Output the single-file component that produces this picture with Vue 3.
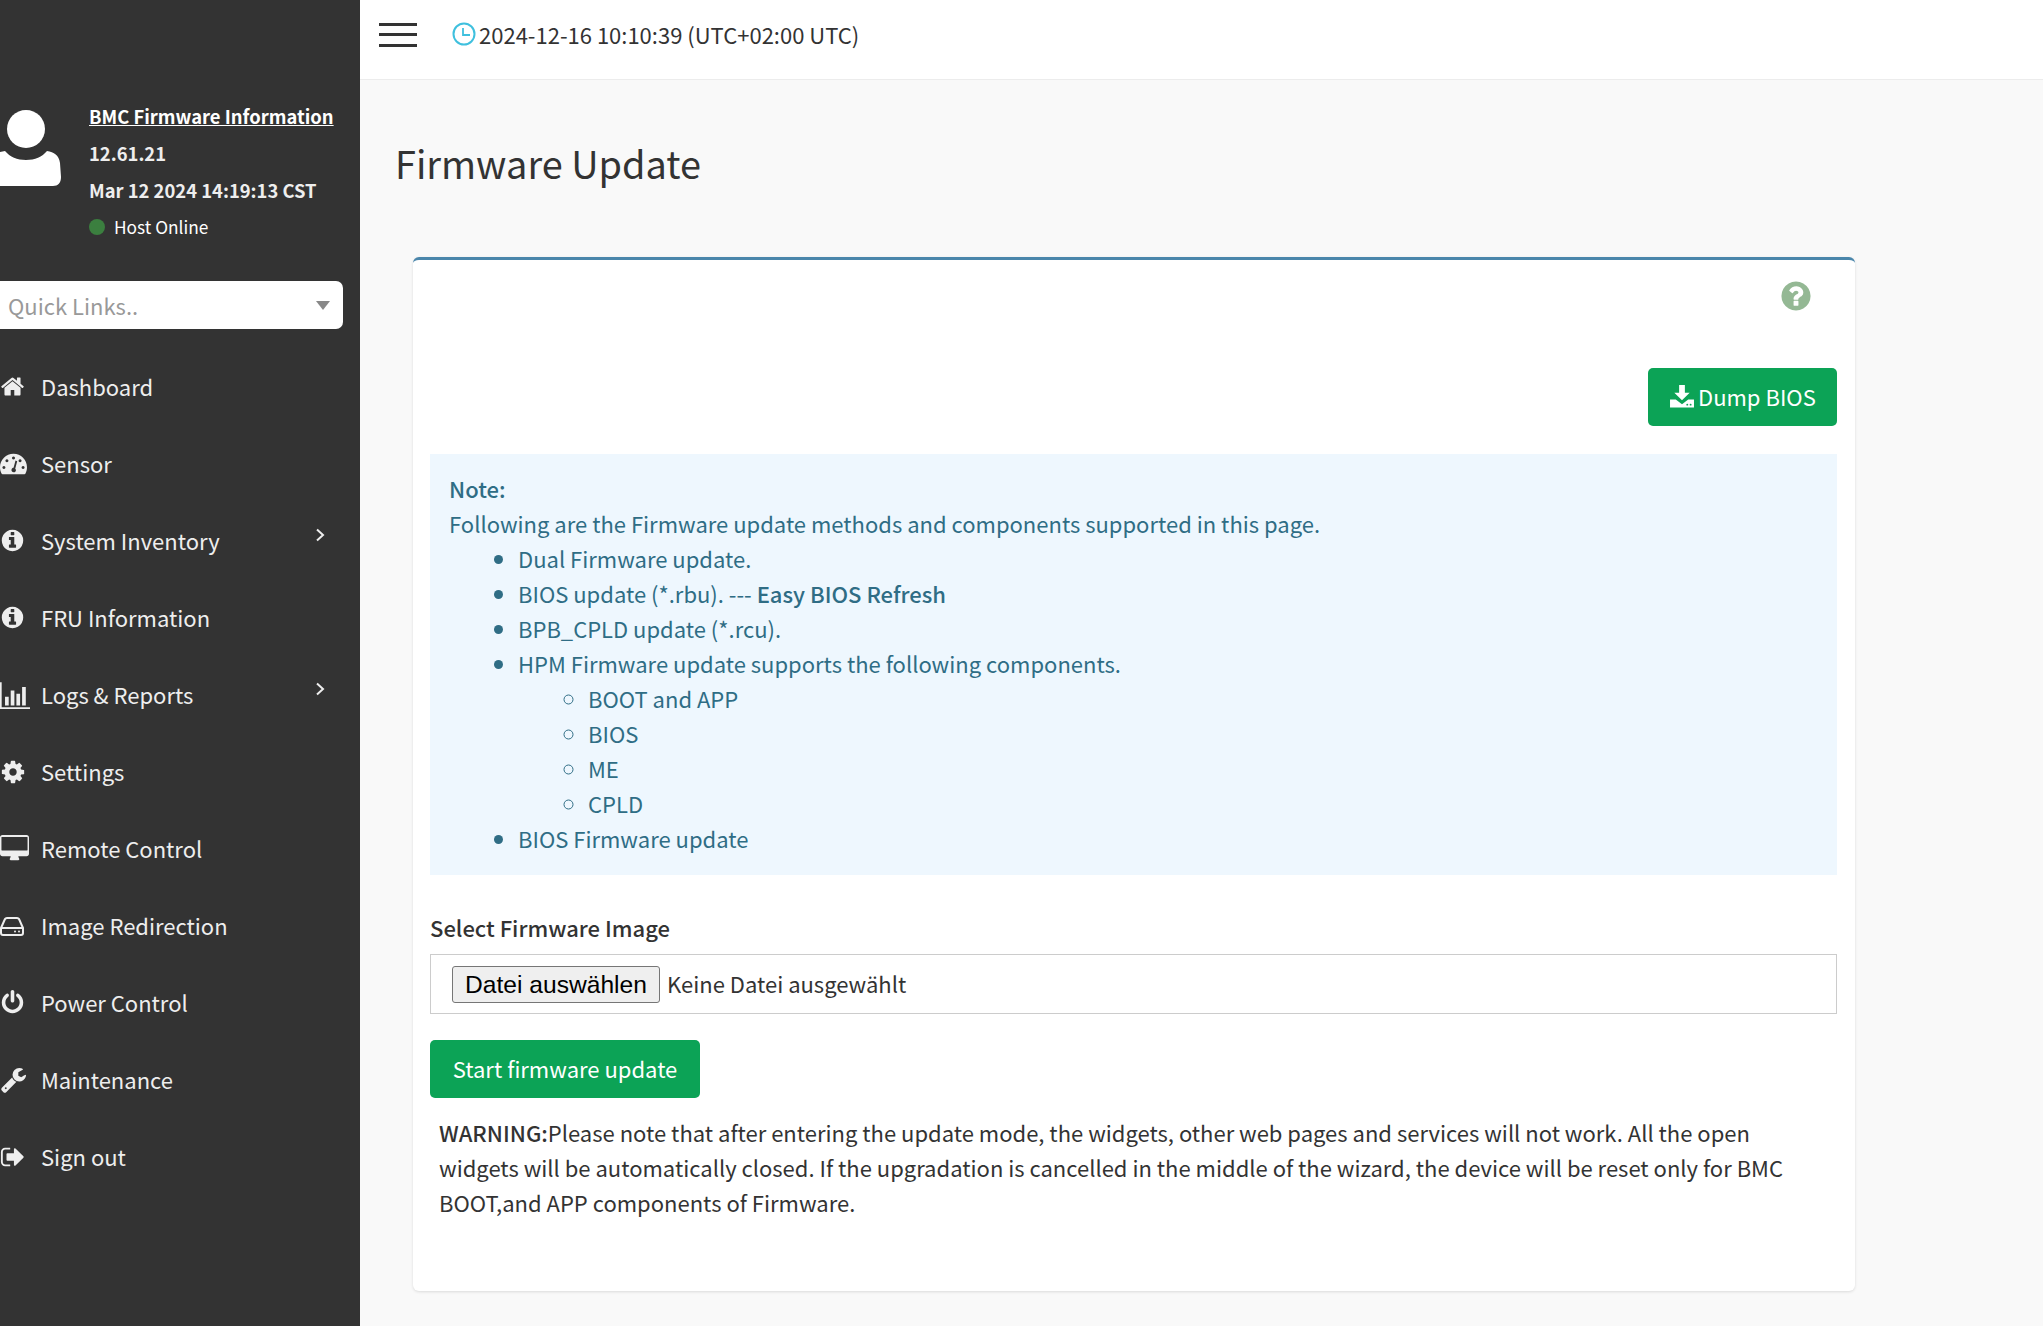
<script setup>
const P = {
  home: 'M1472 992v480q0 26-19 45t-45 19h-384v-384h-256v384h-384q-26 0-45-19t-19-45v-480q0-1 .5-3t.5-3l575-474 575 474q1 2 1 6zm223-69l-62 74q-8 9-21 11h-3q-13 0-21-7l-692-577-692 577q-12 8-24 7-13-2-21-11l-62-74q-8-10-7-23.500t11-21.500l719-599q32-26 76-26t76 26l244 204v-195q0-14 9-23t23-9h192q14 0 23 9t9 23v408l219 182q10 8 11 21.500t-7 23.500z',
  info: 'M1152 1376v-160q0-14-9-23t-23-9h-96v-512q0-14-9-23t-23-9h-320q-14 0-23 9t-9 23v160q0 14 9 23t23 9h96v320h-96q-14 0-23 9t-9 23v160q0 14 9 23t23 9h448q14 0 23-9t9-23zm-128-896v-160q0-14-9-23t-23-9h-192q-14 0-23 9t-9 23v160q0 14 9 23t23 9h192q14 0 23-9t9-23zm640 416q0 209-103 385.500t-279.500 279.500-385.500 103-385.500-103-279.500-279.500-103-385.500 103-385.500 279.500-279.500 385.500-103 385.500 103 279.500 279.500 103 385.500z',
  cog: 'M1152 896q0-106-75-181t-181-75-181 75-75 181 75 181 181 75 181-75 75-181zm512-109v222q0 12-8 23t-20 13l-185 28q-19 54-39 91 35 50 107 138 10 12 10 25t-9 23q-27 37-99 108t-94 71q-12 0-26-9l-138-108q-44 23-91 38-16 136-29 186-7 28-36 28h-222q-14 0-24.500-8.500t-11.500-21.500l-28-184q-49-16-90-37l-141 107q-10 9-25 9-14 0-25-11-126-114-165-168-7-10-7-23 0-12 8-23 15-21 51-66.500t54-70.500q-27-50-41-99l-183-27q-13-2-21-12.500t-8-23.500v-222q0-12 8-23t19-13l186-28q14-46 39-92-40-57-107-138-10-12-10-24 0-10 9-23 26-36 98.500-107.500t94.500-71.500q13 0 26 10l138 107q44-23 91-38 16-136 29-186 7-28 36-28h222q14 0 24.500 8.500t11.500 21.500l28 184q49 16 90 37l142-107q9-9 24-9 13 0 25 10 129 119 165 170 7 8 7 22 0 12-8 23-15 21-51 66.500t-54 70.500q26 50 41 98l183 28q13 2 21 12.500t8 23.500z',
  power: 'M1664 896q0 156-61 298t-164 245-245 164-298 61-298-61-245-164-164-245-61-298q0-182 80.500-343t226.500-270q43-32 95.500-25t83.500 50q32 42 24.500 94.500t-49.500 84.500q-98 74-151.500 181t-53.500 228q0 104 40.500 198.500t109.500 163.500 163.500 109.500 198.500 40.500 198.500-40.500 163.500-109.500 109.500-163.500 40.500-198.500q0-121-53.500-228t-151.500-181q-42-32-49.500-84.500t24.500-94.500q31-43 84-50t95 25q146 109 226.500 270t80.500 343zm-640-768v640q0 52-38 90t-90 38-90-38-38-90v-640q0-52 38-90t90-38 90 38 38 90z',
  wrench: 'M448 1472q0-26-19-45t-45-19-45 19-19 45 19 45 45 19 45-19 19-45zm644-420l-682 682q-37 37-90 37-52 0-91-37l-106-108q-38-36-38-90 0-53 38-91l681-681q39 98 114.500 173.500t173.500 114.500zm634-435q0 39-23 106-47 134-164.500 217.500t-258.500 83.500q-185 0-316.500-131.500t-131.500-316.500 131.500-316.500 316.500-131.500q58 0 121.500 16.500t107.500 46.500q16 11 16 28t-16 28l-293 169v224l193 107q5-3 79-48.500t135.500-81 70.500-35.500q15 0 23.500 10t8.500 25z',
  signout: 'M704 1440q0 4 1 20t.5 26.500-3 23.500-10 19.500-20.500 6.500h-320q-119 0-203.500-84.500t-84.500-203.500v-704q0-119 84.500-203.500t203.500-84.500h320q13 0 22.500 9.500t9.500 22.500q0 4 1 20t.5 26.500-3 23.500-10 19.500-20.500 6.500h-320q-66 0-113 47t-47 113v704q0 66 47 113t113 47h312l11.500 1 11.500 3 8 5.500 7 9 2 13.500zm928-544q0 26-19 45l-544 544q-19 19-45 19t-45-19-19-45v-288h-448q-26 0-45-19t-19-45v-384q0-26 19-45t45-19h448v-288q0-26 19-45t45-19 45 19l544 544q19 19 19 45z',
  desktop: 'M160 0h1600q66 0 113 47t47 113v1088q0 66-47 113t-113 47h-544q0 37 16 77t32 71 16 44q0 26-19 45t-45 19h-512q-26 0-45-19t-19-45q0-14 16-44t32-70 16-78h-544q-66 0-113-47t-47-113v-1088q0-66 47-113t113-47zm-32 128q-13 0-22 10t-10 22v832q0 13 10 22t22 10h1664q13 0 22-10t10-22v-832q0-13-10-22t-22-10z',
  bars: 'M0 128h100v1500h1692v100h-1792z M300 1000h220v520h-220z M640 620h220v900h-220z M980 820h220v700h-220z M1320 420h220v1100h-220z',
  gauge: 'M896 256c-495 0-896 400-896 896 0 150 37 290 100 410 14 26 40 40 70 40h1452c30 0 56-14 70-40 63-120 100-260 100-410 0-496-401-896-896-896z M896 430a100 100 0 1 1-.1 0z M460 620a100 100 0 1 1-.1 0z M260 1060a100 100 0 1 1-.1 0z M1332 620a100 100 0 1 1-.1 0z M1532 1060a100 100 0 1 1-.1 0z M1030 700l110 40-130 500c70 60 70 190-40 230-130 50-250-70-200-190 30-70 90-100 130-100z',
  question: 'M1024 1376v-192q0-14-9-23t-23-9h-192q-14 0-23 9t-9 23v192q0 14 9 23t23 9h192q14 0 23-9t9-23zm256-672q0-88-55.500-163t-138.500-116-170-41q-243 0-371 213-15 24 8 42l132 100q7 6 19 6 16 0 25-12 53-68 86-92 34-24 86-24 48 0 85.500 26t37.500 59q0 38-20 61t-68 45q-63 28-115.500 86.500t-52.500 125.500v36q0 14 9 23t23 9h192q14 0 23-9t9-23q0-19 21.500-49.500t54.500-49.500q32-18 49-28.500t46-35 44.500-48 28-60.500 12.500-81zm384 192q0 209-103 385.500t-279.500 279.500-385.500 103-385.500-103-279.500-279.500-103-385.500 103-385.500 279.500-279.500 385.500-103 385.500 103 279.500 279.500 103 385.500z'
}
const menu = [
  { label: 'Dashboard', icon: 'home', w: 25, vb: '0 0 1792 1792' },
  { label: 'Sensor', icon: 'gauge', w: 27, vb: '0 0 1792 1792', evenodd: true },
  { label: 'System Inventory', icon: 'info', w: 25, vb: '0 0 1792 1792', arrow: true },
  { label: 'FRU Information', icon: 'info', w: 25, vb: '0 0 1792 1792' },
  { label: 'Logs & Reports', icon: 'bars', w: 30, vb: '0 0 1792 1792' },
  { label: 'Settings', icon: 'cog', w: 26, vb: '0 0 1792 1792' },
  { label: 'Remote Control', icon: 'desktop', w: 29, vb: '0 0 1920 1792', evenodd: true },
  { label: 'Image Redirection', icon: 'hdd', w: 24 },
  { label: 'Power Control', icon: 'power', w: 25, vb: '0 0 1792 1792' },
  { label: 'Maintenance', icon: 'wrench', w: 27, vb: '0 0 1792 1792' },
  { label: 'Sign out', icon: 'signout', w: 26, vb: '0 0 1792 1792' }
]
</script>

<template>
  <div class="page">
    <aside class="side">
      <div class="user">
        <svg class="avatar" viewBox="0 0 61 76" width="61" height="76">
          <circle cx="26" cy="19" r="19" fill="#fff" />
          <path d="M-10 48c4-5 10-6 15-7 5 6 12 9 21 9s16-3 21-9c7 1 12 4 13 12l1 14c0 6-3 9-8 9H-10z" fill="#fff" />
        </svg>
        <div class="info">
          <a class="fw">BMC Firmware Information</a>
          <div class="b">12.61.21</div>
          <div class="b">Mar 12 2024 14:19:13 CST</div>
          <div class="host"><span class="dot"></span>Host Online</div>
        </div>
      </div>
      <div class="quick">
        <span>Quick Links..</span>
        <i class="caret"></i>
      </div>
      <nav class="menu">
        <a v-for="m in menu" :key="m.label" class="item">
          <span class="ico">
            <svg v-if="m.icon === 'hdd'" viewBox="0 0 24 20" width="24" height="20" fill="none" stroke="#eee" stroke-width="2">
              <path d="M1 12 5 3q.5-1 2-1h10q1.500 0 2 1l4 9v5q0 2-2 2H3q-2 0-2-2z M1 12h22" />
              <circle cx="15" cy="15.500" r="1" fill="#eee" stroke="none" />
              <circle cx="19" cy="15.500" r="1" fill="#eee" stroke="none" />
            </svg>
            <svg v-else :viewBox="m.vb" :width="m.w" :height="m.w * 1792 / (m.vb === '0 0 1920 1792' ? 1920 : 1792)">
              <path :d="P[m.icon]" fill="#eee" :fill-rule="m.evenodd ? 'evenodd' : 'nonzero'" />
            </svg>
          </span>
          <span class="lbl">{{ m.label }}</span>
          <svg v-if="m.arrow || m.label === 'Logs & Reports'" class="chev" viewBox="0 0 10 14" width="10" height="14">
            <path d="M2 1.500 8 7l-6 5.500" fill="none" stroke="#eee" stroke-width="2" />
          </svg>
        </a>
      </nav>
    </aside>

    <div class="body">
      <header class="top">
        <div class="burger"><i></i><i></i><i></i></div>
        <svg class="clock" viewBox="0 0 24 24" width="24" height="24">
          <circle cx="12" cy="12" r="10.500" fill="none" stroke="#3fc0de" stroke-width="2" />
          <path d="M11 6v7h7" fill="none" stroke="#3fc0de" stroke-width="1.800" />
        </svg>
        <span class="time">2024-12-16 10:10:39 (UTC+02:00 UTC)</span>
      </header>

      <main class="main">
        <h1>Firmware Update</h1>
        <section class="card">
          <div class="help">
            <svg viewBox="0 0 1792 1792" width="34" height="34"><path :d="P.question" fill="#94b894" /></svg>
          </div>
          <div class="dumprow">
            <button class="btn dump">
              <svg viewBox="0 0 25 24" width="24" height="23">
                <path d="M9.500 0h6v8h5l-8 8-8-8h5z M0 15h6l6.500 5L19 15h6v8.500H0z" fill="#fff" />
                <circle cx="18" cy="20.500" r="1" fill="#0ca356" /><circle cx="21.500" cy="20.500" r="1" fill="#0ca356" />
              </svg>
              Dump BIOS
            </button>
          </div>
          <div class="note">
            <strong>Note:</strong>
            <div>Following are the Firmware update methods and components supported in this page.</div>
            <ul>
              <li>Dual Firmware update.</li>
              <li>BIOS update (*.rbu). --- <strong>Easy BIOS Refresh</strong></li>
              <li>BPB_CPLD update (*.rcu).</li>
              <li>HPM Firmware update supports the following components.
                <ul>
                  <li>BOOT and APP</li>
                  <li>BIOS</li>
                  <li>ME</li>
                  <li>CPLD</li>
                </ul>
              </li>
              <li>BIOS Firmware update</li>
            </ul>
          </div>
          <label class="lab">Select Firmware Image</label>
          <div class="file">
            <button class="choose">Datei auswählen</button>
            <span class="none">Keine Datei ausgewählt</span>
          </div>
          <button class="btn start">Start firmware update</button>
          <p class="warn"><strong>WARNING:</strong>Please note that after entering the update mode, the widgets, other web pages and services will not work. All the open widgets will be automatically closed. If the upgradation is cancelled in the middle of the wizard, the device will be reset only for BMC BOOT,and APP components of Firmware.</p>
        </section>
      </main>
    </div>
  </div>
</template>

<style>
html, body { margin: 0; background: #f9f9f9; }
</style>

<style scoped>
.page {
  display: flex;
  width: 2043px;
  height: 1326px;
  overflow: hidden;
  font-family: "Noto Sans CJK SC", "Noto Sans", sans-serif;
  font-size: 22px;
  line-height: 35px;
  color: #333;
}
.side {
  width: 360px;
  flex: none;
  background: #333;
  color: #eee;
  padding-top: 98px;
  box-sizing: border-box;
}
.user { display: flex; align-items: flex-start; height: 183px; }
.avatar { flex: none; margin: 12px 28px 0 0; overflow: visible; }
.info { font-size: 18.400px; line-height: 36.900px; color: #fff; white-space: nowrap; }
.fw { text-decoration: underline; font-weight: 700; display: block; }
.b { font-weight: 700; color: #eee; }
.host { display: flex; align-items: center; font-size: 17.300px; }
.dot { width: 16px; height: 16px; border-radius: 50%; background: #3b7f3f; margin-right: 9px; }
.quick {
  width: 343px;
  height: 48px;
  box-sizing: border-box;
  background: #fff;
  border-radius: 0 7px 7px 0;
  display: flex;
  align-items: center;
  justify-content: space-between;
  padding: 0 13px 0 8px;
  color: #999;
}
.caret {
  width: 0;
  height: 0;
  border-left: 7px solid transparent;
  border-right: 7px solid transparent;
  border-top: 9px solid #888;
}
.menu { padding-top: 19px; }
.item { display: flex; align-items: center; height: 77px; position: relative; }
.ico { width: 41px; flex: none; display: flex; align-items: center; }
.lbl { color: #eee; }
.chev { position: absolute; left: 315px; top: 26px; }
.body { flex: 1; min-width: 0; display: flex; flex-direction: column; }
.top {
  height: 69px;
  flex: none;
  background: #fff;
  border-bottom: 1px solid #ececec;
  display: flex;
  align-items: center;
  padding: 0 0 10px 19px;
}
.burger { width: 38px; display: flex; flex-direction: column; gap: 7.500px; margin-right: 35px; }
.burger i { display: block; height: 3px; background: #333; }
.clock { margin-right: 3px; margin-top: -1px; }
.main { flex: 1; padding: 0 188px 0 35px; background: #f9f9f9; }
h1 {
  margin: 0;
  padding-top: 58px;
  height: 177px;
  box-sizing: border-box;
  font-size: 37.900px;
  line-height: 50px;
  font-weight: 400;
  color: #333;
}
.card {
  margin-left: 18px;
  width: 1442px;
  height: 1034px;
  box-sizing: border-box;
  border-top: 3px solid #4a86ab;
  border-radius: 6px;
  background: #fff;
  box-shadow: 0 1px 3px rgba(0, 0, 0, .12);
  padding: 0 18px 0 17px;
}
.help { display: flex; justify-content: flex-end; padding: 19px 24px 0 0; height: 108px; box-sizing: border-box; }
.dumprow { display: flex; justify-content: flex-end; }
.btn {
  border: 0;
  border-radius: 5px;
  background: #0ca356;
  color: #fff;
  font: inherit;
  height: 58px;
  display: flex;
  align-items: center;
}
.dump { width: 189px; padding: 0 0 2px 22px; gap: 4px; }
.note {
  margin-top: 28px;
  height: 421px;
  box-sizing: border-box;
  background: #eef7fe;
  color: #2f6d85;
  padding: 17px 19px;
}
.note strong { font-weight: 500; }
ul { margin: 0; padding-left: 69px; }
ul ul { list-style: circle; padding-left: 70px; }
.lab { display: block; margin-top: 35px; font-weight: 500; color: #333; height: 44px; }
.file {
  height: 60px;
  box-sizing: border-box;
  border: 1px solid #ccc;
  display: flex;
  align-items: center;
  padding-left: 21px;
  gap: 7px;
  color: #333;
}
.none { margin-top: -1px; }
.choose {
  height: 37px;
  width: 208px;
  padding: 2px 0 0;
  border: 1px solid #767676;
  border-radius: 3px;
  background: #efefef;
  color: #000;
  font-family: "Liberation Sans", Arial, sans-serif;
  font-size: 24.600px;
}
.start { margin-top: 26px; width: 270px; justify-content: center; padding-bottom: 2px; }
.warn { margin: 17px 0 0 9px; width: 1380px; color: #333; }
.warn strong { font-weight: 500; }
</style>
